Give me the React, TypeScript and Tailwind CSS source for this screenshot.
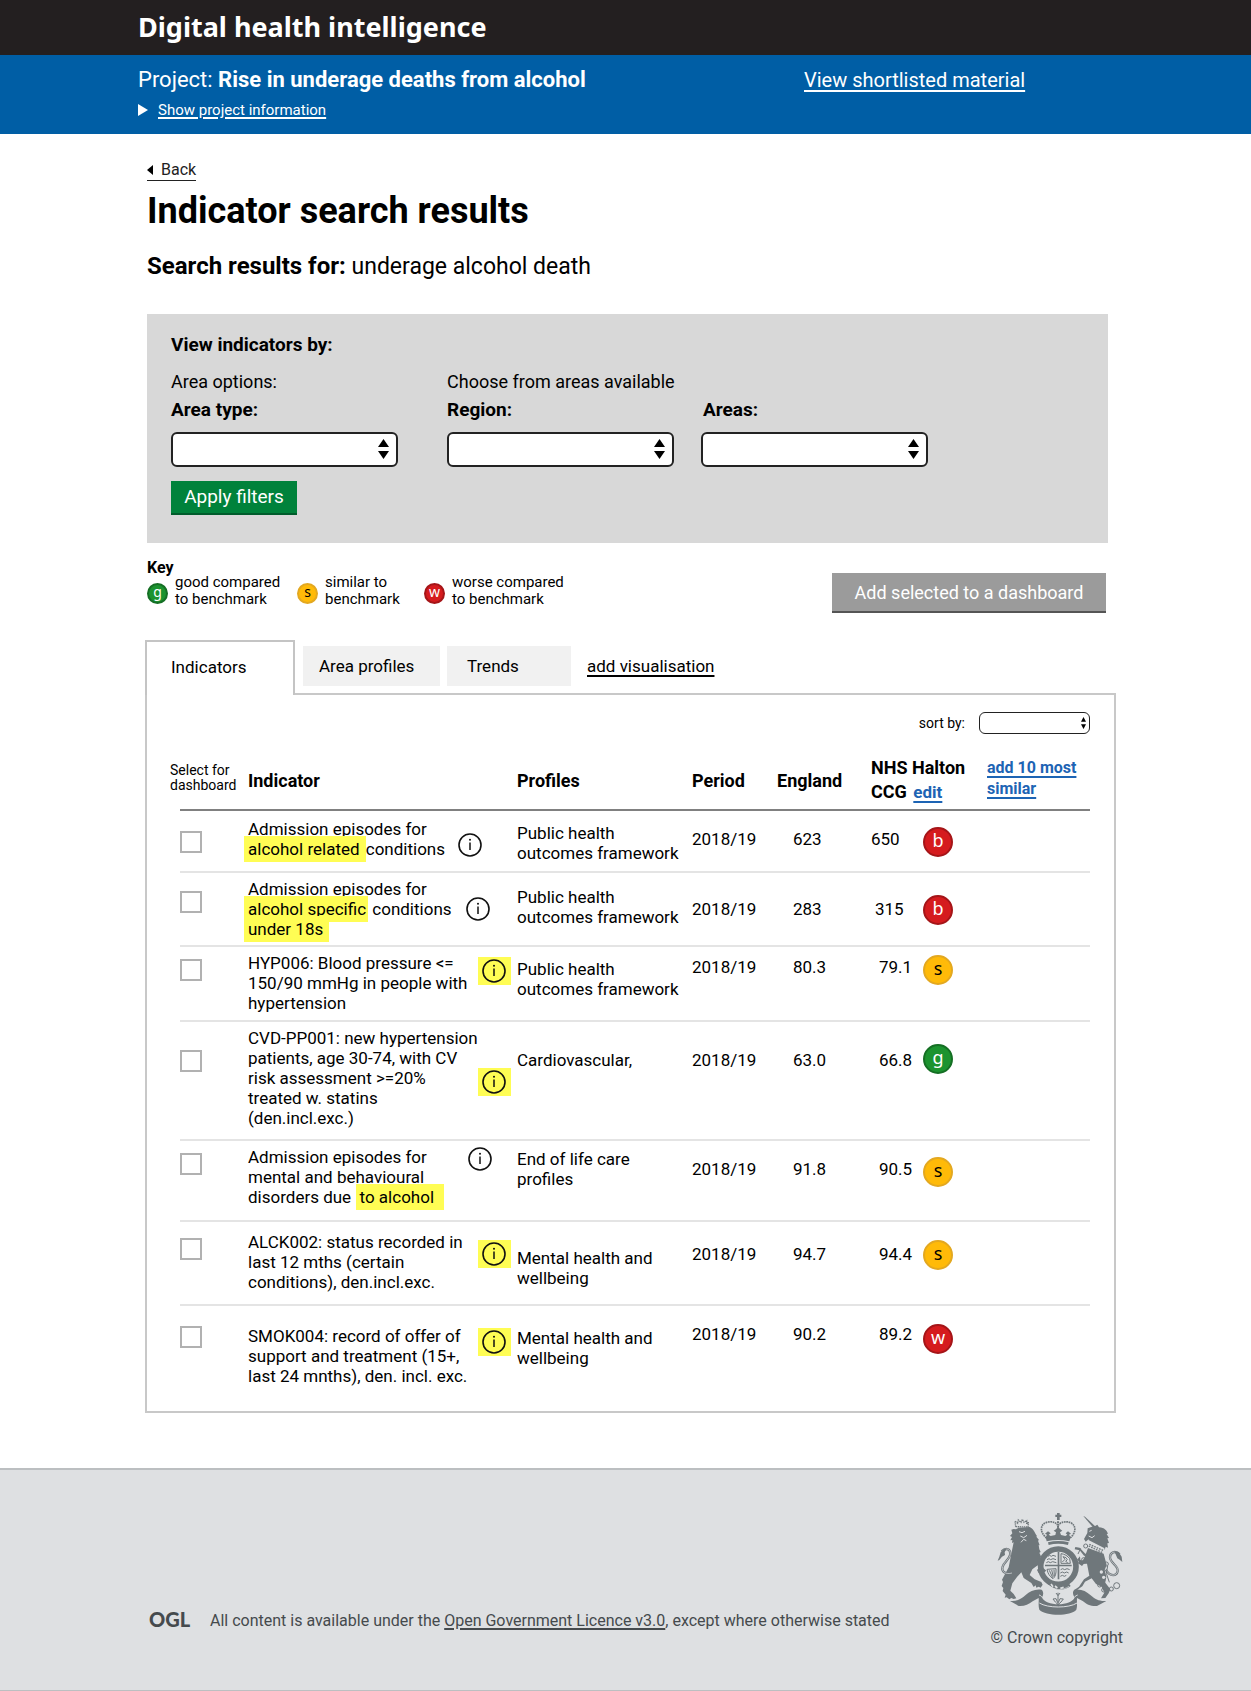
import React from "react";

type Status = "b" | "s" | "g" | "w";

const statusColours: Record<Status, string> = {
  b: "bg-[#d51b1e] border-[#a51518] text-white",
  w: "bg-[#d51b1e] border-[#a51518] text-white",
  s: "bg-[#ffba08] border-[#e3a820] text-black",
  g: "bg-[#1c932f] border-[#156f24] text-white",
};

function Badge({ status, small = false }: { status: Status; small?: boolean }) {
  const size = small
    ? "size-[21px] text-[14px] leading-[14px]"
    : "size-[30px] text-[18px] leading-[22px]";
  return (
    <span
      className={`inline-block shrink-0 rounded-full border-2 text-center font-['Noto_Sans',sans-serif] ${size} ${statusColours[status]}`}
    >
      {status}
    </span>
  );
}

function Select({ label, id }: { label: string; id: string }) {
  return (
    <div className="relative w-[227px]">
      <select
        id={id}
        aria-label={label}
        className="h-[35px] w-full appearance-none rounded-md border-2 border-[#222] bg-white pr-8 pl-2 text-[17px]"
      >
        <option value=""></option>
      </select>
      <svg viewBox="0 0 11 20" className="pointer-events-none absolute top-[7px] right-[9px] h-5 w-[11px]">
        <path d="M5.5 0 11 8H0Z M0 12H11L5.5 20Z" />
      </svg>
    </div>
  );
}

function Info({ highlighted = false }: { highlighted?: boolean }) {
  return (
    <button
      type="button"
      aria-label="More information"
      className={highlighted ? "block bg-[#fffd54] py-0.5 pr-[5px] pl-1" : "block"}
    >
      <svg viewBox="0 0 24 24" className="size-6">
        <circle cx="12" cy="12" r="11" fill="none" stroke="#111" strokeWidth="1.6" />
        <circle cx="12" cy="6.8" r="1" fill="#111" />
        <path d="M12 9.5V17" stroke="#111" strokeWidth="1.5" />
      </svg>
    </button>
  );
}

function Mark({ children }: { children: React.ReactNode }) {
  return <mark className="-ml-1 bg-[#fffd54] py-[3px] pr-0.5 pl-1 text-black">{children}</mark>;
}

interface Row {
  id: string;
  height: string;
  lines: React.ReactNode[];
  profile: string[];
  england: string;
  local: string;
  status: Status;
  highlighted?: boolean;
  check: string;
  text: string;
  info: string;
  profilePad: string;
  value: string;
  localPad: string;
  badge: string;
}

const rows: Row[] = [
  {
    id: "alcohol-related",
    height: "h-[62px]",
    lines: ["Admission episodes for", <><Mark>alcohol related&nbsp;</Mark>conditions</>],
    profile: ["Public health", "outcomes framework"],
    england: "623",
    local: "650",
    status: "b",
    check: "pt-5",
    text: "pt-2",
    info: "pt-5.5",
    profilePad: "pt-3",
    value: "pt-4.5",
    localPad: "pl-0",
    badge: "pt-4",
  },
  {
    id: "alcohol-specific",
    height: "h-[74px]",
    lines: [
      "Admission episodes for",
      <><Mark>alcohol specific</Mark> conditions</>,
      <Mark>under 18s&nbsp;</Mark>,
    ],
    profile: ["Public health", "outcomes framework"],
    england: "283",
    local: "315",
    status: "b",
    check: "pt-4.5",
    text: "pt-1.5",
    info: "pt-6 pl-2",
    profilePad: "pt-3.5",
    value: "pt-6.5",
    localPad: "pl-1",
    badge: "pt-5.5",
  },
  {
    id: "hyp006",
    height: "h-[75px]",
    lines: ["HYP006: Blood pressure <=", "150/90 mmHg in people with", "hypertension"],
    profile: ["Public health", "outcomes framework"],
    england: "80.3",
    local: "79.1",
    status: "s",
    highlighted: true,
    check: "pt-3",
    text: "pt-1.5",
    info: "pt-2.5 pl-5",
    profilePad: "pt-3",
    value: "pt-2.5",
    localPad: "pl-2",
    badge: "pt-2",
  },
  {
    id: "cvd-pp001",
    height: "h-[119px]",
    lines: [
      "CVD-PP001: new hypertension",
      "patients, age 30-74, with CV",
      "risk assessment >=20%",
      "treated w. statins",
      "(den.incl.exc.)",
    ],
    profile: ["Cardiovascular,"],
    england: "63.0",
    local: "66.8",
    status: "g",
    highlighted: true,
    check: "pt-7",
    text: "pt-1.5",
    info: "pt-11.5 pl-5",
    profilePad: "pt-7",
    value: "pt-7",
    localPad: "pl-2",
    badge: "pt-5.5",
  },
  {
    id: "mental-behavioural",
    height: "h-[81px]",
    lines: ["Admission episodes for", "mental and behavioural", <>disorders due&nbsp; <Mark>to alcohol&nbsp;&nbsp;</Mark></>],
    profile: ["End of life care", "profiles"],
    england: "91.8",
    local: "90.5",
    status: "s",
    check: "pt-3",
    text: "pt-1.5",
    info: "pt-1.5 pl-2.5",
    profilePad: "pt-2",
    value: "pt-4.5",
    localPad: "pl-2",
    badge: "pt-4",
  },
  {
    id: "alck002",
    height: "h-[84px]",
    lines: ["ALCK002: status recorded in", "last 12 mths (certain", "conditions), den.incl.exc."],
    profile: ["Mental health and", "wellbeing"],
    england: "94.7",
    local: "94.4",
    status: "s",
    highlighted: true,
    check: "pt-4",
    text: "pt-2.5",
    info: "pt-4.5 pl-5",
    profilePad: "pt-6.5",
    value: "pt-5.5",
    localPad: "pl-2",
    badge: "pt-4.5",
  },
  {
    id: "smok004",
    height: "h-[86px]",
    lines: ["SMOK004: record of offer of", "support and treatment (15+,", "last 24 mnths), den. incl. exc."],
    profile: ["Mental health and", "wellbeing"],
    england: "90.2",
    local: "89.2",
    status: "w",
    highlighted: true,
    check: "pt-5",
    text: "pt-5",
    info: "pt-5.5 pl-5",
    profilePad: "pt-5.5",
    value: "pt-4.5",
    localPad: "pl-2",
    badge: "pt-4.5",
  },
];

function Lines({ lines }: { lines: React.ReactNode[] }) {
  return (
    <>
      {lines.map((line, i) => (
        <span key={i} className="block whitespace-nowrap">
          {line}
        </span>
      ))}
    </>
  );
}

function ResultsTable() {
  return (
    <table className="w-full table-fixed border-collapse text-left text-[17px] leading-5">
      <colgroup>
        <col className="w-[68px]" />
        <col className="w-[210px]" />
        <col className="w-[59px]" />
        <col className="w-[175px]" />
        <col className="w-[85px]" />
        <col className="w-[94px]" />
        <col className="w-[116px]" />
        <col />
      </colgroup>
      <thead>
        <tr className="h-[58px] border-b-2 border-[#808080] text-[18px] font-bold">
          <th scope="col" className="pb-1.5">
            <span className="-ml-2.5 block w-[72px] text-[14px] leading-[15px] font-normal">
              Select for dashboard
            </span>
          </th>
          <th scope="col" colSpan={2}>Indicator</th>
          <th scope="col">Profiles</th>
          <th scope="col">Period</th>
          <th scope="col">England</th>
          <th scope="col" className="pb-0.5 leading-6 whitespace-nowrap">
            NHS Halton
            <br />
            CCG{" "}
            <a href="#edit" className="ml-0.5 text-[17px] text-[#1d64b4] underline decoration-2 underline-offset-3">
              edit
            </a>
          </th>
          <th scope="col" className="pb-1.5 text-[16px] leading-[21px] whitespace-nowrap">
            <a href="#similar" className="text-[#1d64b4] underline decoration-2 underline-offset-3">
              add 10 most
              <br />
              similar
            </a>
          </th>
        </tr>
      </thead>
      <tbody>
        {rows.map((row) => (
          <tr key={row.id} className={`border-b-2 border-[#e4e4e4] align-top last:border-0 ${row.height}`}>
            <td className={row.check}>
              <input
                type="checkbox"
                id={`select-${row.id}`}
                aria-label={`Select ${row.id} for dashboard`}
                className="block size-[22px] appearance-none border-2 border-[#b1b1b1] bg-white checked:bg-[#b1b1b1]"
              />
            </td>
            <td className={row.text}>
              <Lines lines={row.lines} />
            </td>
            <td className={row.info}>
              <Info highlighted={row.highlighted} />
            </td>
            <td className={row.profilePad}>
              <Lines lines={row.profile} />
            </td>
            <td className={row.value}>2018/19</td>
            <td className={`pl-4 ${row.value}`}>{row.england}</td>
            <td>
              <div className="flex">
                <span className={`w-[52px] ${row.value} ${row.localPad}`}>{row.local}</span>
                <span className={`flex ${row.badge}`}>
                  <Badge status={row.status} />
                </span>
              </div>
            </td>
            <td></td>
          </tr>
        ))}
      </tbody>
    </table>
  );
}

function Crest() {
  return (
    <svg viewBox="118 60 378 312" className="h-[104px] w-[126px]" fill="#6f777b" role="img" aria-label="Royal coat of arms">
      {/* imperial crown */}
      <path d="M298 63h8v5h5v7h-5v9h-8v-9h-5v-7h5z" />
      <g fill="none" stroke="#6f777b" strokeWidth="5" strokeDasharray="5 2">
        <path d="M267 138C246 122 246 97 267 91c18-5 34 2 34 14 0-12 18-19 35-14 21 7 20 32 1 47" />
        <path d="M301 88v38" strokeWidth="6" />
      </g>
      <path d="m264 136 4-8-6-3 9-7 8 6-6 4 6 4 14-3 2-8-7-5 7-4 6-8 7 8 6 4-7 5 3 8 13 3 6-4-5-4 7-6 9 7-6 3 5 8-4 12c-22-5-45-5-68 0z" />
      <path d="M271 151c20-5 42-5 62 0l-2 8c-20-5-39-5-58 0z" />
      {/* garter and shield */}
      <circle cx="302" cy="224" r="53" fill="none" stroke="#6f777b" strokeWidth="17" />
      <circle cx="302" cy="221" r="40" fill="#dee0e2" />
      <path d="M300 180h5v82h-5zM262 218h80v5h-80z" />
      <g fill="none" stroke="#6f777b" strokeWidth="3">
        <path d="m271 193 5-3 5 3 5-3 9 3M268 203l6-3 5 3 7-3 9 3M266 212l6-3 6 3 7-3 11 3M309 233l6-3 6 3 7-3 8 3M308 243l6-3 6 3 7-3 6 3M308 253l6-3 6 3 6-3" />
        <path d="M310 214V185c11 1 20 7 26 15l2 14zM314 210l8-8-6-8 9 3 4 6-5 5 6 4M268 232l27-2c1 14-2 25-9 30-10-7-16-16-18-28zM275 235l10 22M282 234l5 20M289 233l1 19" />
      </g>
      <path d="m270 276 10-10c18 12 35 12 50 3l9 13c-23 17-46 15-69-6z" />
      <path d="M273 281c20 14 40 16 61 2" fill="none" stroke="#dee0e2" strokeWidth="2" />
      <path d="m280 276 6 8M292 282l7 6M308 289l10-3" stroke="#dee0e2" strokeWidth="5" />
      {/* lion */}
      <path d="m174 104-2-17 8 7 2-10 8 7 4-9 5 9 8-5v10l5-6-1 15z" fill="none" stroke="#6f777b" strokeWidth="4" strokeDasharray="4 2" />
      <path d="m175 112 8-5 33-2c14 7 16 20 22 27l-2 2 8 10-3 2 5 14-3-1 2 13 4 8-4 2 7 15-5-3 7 17 3 17 9 8-10 8-8-3-5 3-5-10 5-5-3-9-16 12-8 17 15 13 20 8 4 8-6 9-6-3-7 3-2-7-6 5-7-12-23-15-7-17-13 14-14 19-6 22 10 10 8 13-8 2-7-3-6 4-8-6-6 1 3-9-9-11 2-9-5-6 4-12-3-7 20-37 6-31 9-44-5 2 1-9-6 1 5-10-6-3 7-8-3-11 7-2z" />
      <path d="m184 119 9 3 9-4M188 132l10 5 10-7M190 151l8-9 8 4" fill="none" stroke="#dee0e2" strokeWidth="3" />
      <path d="M163 243c-17 5-33-2-28-19 5-16 23-24 23-40-1-15-15-17-26-6" fill="none" stroke="#6f777b" strokeWidth="7" />
      <path d="M163 243c-17 5-33-2-28-19 5-16 23-24 23-40-1-15-15-17-26-6" fill="none" stroke="#dee0e2" strokeWidth="2" />
      <path d="m120 206 5-12 4-13 9-10 9-2-6 12 1 8-9 5-8 10z" />
      {/* unicorn */}
      <path d="m377 72 5 2 35 33-7 4z" />
      <path d="m411 103 8-5 5 8c17 1 23 10 27 19l-4 1 7 12-5 1 5 14-5 1 2 13-7-3-3 9-5-6-4 4-24-17c-10 0-15-5-15-12l-9 7-5-8 10-18 1-14 13-5z" />
      <path d="m395 118 7-3m-9 17 10 5 8-6" stroke="#dee0e2" strokeWidth="3" fill="none" />
      <path d="m391 150 47 24" stroke="#dee0e2" strokeWidth="12" />
      <path d="m395 157 43 19m-45-14 42 20" stroke="#6f777b" strokeWidth="4" strokeDasharray="5 3" />
      <path d="m391 168 47 17 9 34-6 15 5 20-3 18 15 20-5 12-10 14-13 1 10-17-8-18-17-8-13-17-20 10-8 14-15 10 10 14-20-3 2-11 13-9 15-22 16-11-7-36-15 1-15-13 9-10 1 11 9 2z" />
      <path d="m379 191-13-16-15-3 2-7 13 2 17 18 15 2 1 9zM388 204l-15 18-12-8 4-12 6 12 8-15z" />
      <path d="M444 233c14 23 33 19 36 5 4-16-23-25-23-42 0-15 15-22 29-9" fill="none" stroke="#6f777b" strokeWidth="7" />
      <path d="M444 233c14 23 33 19 36 5 4-16-23-25-23-42 0-15 15-22 29-9" fill="none" stroke="#dee0e2" strokeWidth="2" />
      <path d="m470 177 13 3 9 14 2 16-8-7-7-4z" />
      <g fill="none" stroke="#6f777b" strokeWidth="3">
        <circle cx="384" cy="162" r="6" />
        <circle cx="378" cy="203" r="6" />
        <circle cx="446" cy="216" r="6" />
        <circle cx="426" cy="279" r="6" />
        <circle cx="438" cy="294" r="6" />
        <circle cx="461" cy="291" r="6" />
        <circle cx="477" cy="281" r="9" />
        <path d="m369 169-8 17M450 222l-4 22 9 27" />
      </g>
      <g fill="#dee0e2">
        <circle cx="431" cy="240" r="5" />
        <circle cx="438" cy="256" r="5" />
        <circle cx="448" cy="270" r="4" />
      </g>
      {/* motto ribbon */}
      <path d="M157 327c20 2 33-5 47-18 13-12 29-19 48-16 6 6 6 15 1 23 9 28 89 28 98 0-6-8-7-17-1-23 21-3 35 4 49 17 14 12 27 19 47 17l-28 15c-20 1-31-5-43-15l-17-9c-1 12 2 22-2 35-17 20-91 20-111 0-4-13-1-23-2-35l-18 10c-13 10-24 15-42 14z" />
      <path d="M245 333c25 16 89 16 113 0M253 316c-2-4-5-6-9-7M350 316c3-4 7-6 10-7" fill="none" stroke="#dee0e2" strokeWidth="3" />
      <g fill="none" stroke="#6f777b" strokeWidth="3">
        <path d="M301 302v38M301 311l-6-8m6 8 6-8M301 338l-8-8-7-9 9-1 5 12M301 338l9-8 7-9-10-1-5 12" />
      </g>
    </svg>
  );
}

const keyItems: { status: Status; lines: string[]; width: string }[] = [
  { status: "g", lines: ["good compared", "to benchmark"], width: "w-[150px]" },
  { status: "s", lines: ["similar to", "benchmark"], width: "w-[127px]" },
  { status: "w", lines: ["worse compared", "to benchmark"], width: "w-[150px]" },
];

export default function App() {
  return (
    <div className="bg-white font-['Roboto','Liberation_Sans',sans-serif] text-black">
      <header>
        <div className="bg-[#231f20] pl-[138px] text-white">
          <p className="font-['Noto_Sans',sans-serif] text-[27px] leading-[54px] font-bold pb-px">
            Digital health intelligence
          </p>
        </div>
        <div className="flex bg-[#005ea5] pt-2.5 pr-4 pb-3.5 pl-[138px] text-white">
          <div className="w-[666px]">
            <p className="text-[22px] leading-[30px]">
              Project: <strong className="font-bold">Rise in underage deaths from alcohol</strong>
            </p>
            <button type="button" className="mt-[5px] flex items-center text-[15px] leading-5">
              <svg viewBox="0 0 10 12" className="mr-2.5 h-3 w-2.5 fill-white">
                <path d="M0 0 10 6 0 12Z" />
              </svg>
              <span className="underline decoration-2 underline-offset-2">Show project information</span>
            </button>
          </div>
          <a href="#shortlist" className="text-[20px] leading-[30px] underline decoration-2 underline-offset-3">
            View shortlisted material
          </a>
        </div>
      </header>

      <main className="pt-6 pr-[135px] pl-[145px]">
        <div className="pr-2 pl-0.5">
          <a
            href="#back"
            className="inline-flex items-center border-b border-[#222] text-[16px] leading-5 text-[#222]"
          >
            <svg viewBox="0 0 6 10" className="mr-2 h-2.5 w-1.5">
              <path d="M6 0V10L0 5Z" />
            </svg>
            Back
          </a>
          <h1 className="mt-[9px] text-[36px] leading-10 font-bold">Indicator search results</h1>
          <p className="mt-5 text-[23px] leading-[30px]">
            <strong className="text-[24px] font-bold">Search results for:</strong> underage alcohol death
          </p>

          <form className="mt-8 bg-[#d8d8d8] px-6 pt-5 pb-7 text-[18px] leading-[22px]" onSubmit={(e) => e.preventDefault()}>
            <h2 className="text-[19px] font-bold">View indicators by:</h2>
            <div className="mt-[15px] flex">
              <div className="w-[276px]">
                <p>Area options:</p>
                <label htmlFor="area-type" className="mt-1.5 mb-[11px] block text-[19px] font-bold">Area type:</label>
                <Select id="area-type" label="Area type" />
              </div>
              <div>
                <p>Choose from areas available</p>
                <div className="flex gap-[27px]">
                  <div>
                    <label htmlFor="region" className="mt-1.5 mb-[11px] block text-[19px] font-bold">Region:</label>
                    <Select id="region" label="Region" />
                  </div>
                  <div>
                    <label htmlFor="areas" className="mt-1.5 mb-[11px] block pl-0.5 text-[19px] font-bold">Areas:</label>
                    <Select id="areas" label="Areas" />
                  </div>
                </div>
              </div>
            </div>
            <button type="submit" className="mt-3.5 h-[34px] w-[126px] border-b-2 border-[#005c2b] bg-[#00823b] text-[19px] text-white">
              Apply filters
            </button>
          </form>

          <div className="mt-[17px] flex items-start justify-between">
            <section>
              <h2 className="text-[16px] leading-4 font-bold">Key</h2>
              <ul className="-mt-0.5 flex text-[15px] leading-[17px]">
                {keyItems.map((item) => (
                  <li key={item.status} className={`flex items-end gap-[7px] ${item.width}`}>
                    <span className="flex pb-1">
                      <Badge status={item.status} small />
                    </span>
                    <span className="whitespace-nowrap">
                      {item.lines[0]}
                      <br />
                      {item.lines[1]}
                    </span>
                  </li>
                ))}
              </ul>
            </section>
            <button
              type="button"
              className="mt-[13px] mr-0.5 h-10 w-[274px] border-b-2 border-[#555] bg-[#9b9b9b] text-[18px] text-white"
            >
              Add selected to a dashboard
            </button>
          </div>
        </div>

        <div role="tablist" className="relative mt-[27px] flex items-start text-[17px] leading-5">
          <button
            type="button"
            role="tab"
            aria-selected="true"
            className="z-10 -mb-0.5 h-[55px] w-[150px] border-2 border-b-0 border-[#c4c4c4] bg-white pb-1 pl-6 text-left"
          >
            Indicators
          </button>
          <button type="button" role="tab" aria-selected="false" className="mt-1.5 ml-2 h-10 w-[137px] bg-[#f1f1f1] pl-4 text-left">
            Area profiles
          </button>
          <button type="button" role="tab" aria-selected="false" className="mt-1.5 ml-[7px] h-10 w-[124px] bg-[#f1f1f1] pl-5 text-left">
            Trends
          </button>
          <a href="#visualisation" className="mt-4 ml-4 underline decoration-2 underline-offset-3">
            add visualisation
          </a>
        </div>
        <section className="border-2 border-[#c8c8c8] pt-[17px] pr-6 pb-5 pl-[33px]">
          <div className="mb-[18px] flex items-center justify-end text-[14px] leading-5">
            <label htmlFor="sort">sort by:</label>
            <div className="relative ml-3.5 w-[111px]">
              <select id="sort" className="block h-[22px] w-full appearance-none rounded-md border border-[#222] bg-white">
                <option value=""></option>
              </select>
              <svg viewBox="0 0 11 20" preserveAspectRatio="none" className="pointer-events-none absolute top-[5px] right-1 h-3 w-[5px]">
                <path d="M5.5 0 11 8H0Z M0 12H11L5.5 20Z" />
              </svg>
            </div>
          </div>
          <ResultsTable />
        </section>
      </main>

      <footer className="mt-[55px] flex justify-between border-y-2 border-[#bcbfc1] bg-[#dee0e2] pt-[42px] pr-32 pb-[42px] pl-[149px] text-[16px] leading-5 text-[#454a4d]">
        <div className="flex items-start self-end pb-[17px]">
          <span className="w-[61px] font-['Lato',sans-serif] text-[20px] leading-4 font-black">OGL</span>
          <p>
            All content is available under the{" "}
            <a href="#ogl" className="underline decoration-2 underline-offset-2">Open Government Licence v3.0</a>, except
            where otherwise stated
          </p>
        </div>
        <div className="flex flex-col items-end">
          <Crest />
          <a href="#copyright" className="mt-3">© Crown copyright</a>
        </div>
      </footer>
    </div>
  );
}
